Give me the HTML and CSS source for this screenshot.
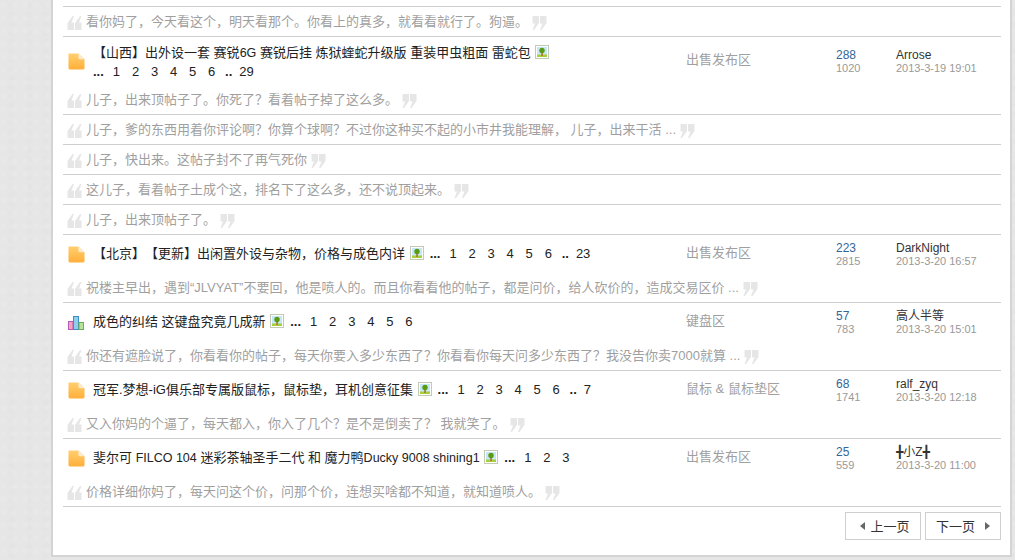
FILE: index.html
```html
<!DOCTYPE html>
<html lang="zh">
<head>
<meta charset="utf-8">
<title>论坛</title>
<link rel="stylesheet" href="styles.css">
</head>
<body>
<svg class="defs" width="0" height="0" aria-hidden="true">
  <defs>
    <linearGradient id="fold" x1="0" y1="0" x2="0" y2="1"><stop offset="0" stop-color="#ffcf70"/><stop offset="1" stop-color="#ffaf3a"/></linearGradient>
    <symbol id="file" viewBox="0 0 18 18"><path d="M1 0.500H11L17.500 6.500V16a1.500 1.500 0 0 1-1.500 1.500H2A1.500 1.500 0 0 1 .5 16V1.500A1 1 0 0 1 1 .5Z" fill="url(#fold)"/><path d="M11 .5 17.500 6.500H12.500A1.500 1.500 0 0 1 11 5Z" fill="#fbeacb"/></symbol>
    <symbol id="chart" viewBox="0 0 16 14"><rect x=".5" y="5.500" width="4.500" height="8" fill="#f7a3b5" stroke="#b45ab8"/><rect x="5.500" y=".5" width="5" height="13" fill="#8dcdf0" stroke="#3d8fc4"/><rect x="11" y="6.500" width="4.500" height="7" fill="#b7e29c" stroke="#6eb04f"/></symbol>
    <symbol id="pic" viewBox="0 0 14 14"><rect x=".5" y=".5" width="13" height="13" fill="#fff" stroke="#c4c9b4"/><rect x="2" y="2" width="10" height="10" fill="#c5e8f7"/><rect x="2" y="9.500" width="10" height="2.500" fill="#a6cf3c"/><rect x="6.300" y="7" width="1.500" height="4" fill="#b5672a"/><circle cx="7" cy="5.500" r="2.700" fill="#5b9a12"/></symbol>
    <symbol id="ql" viewBox="0 0 15 14"><path d="M5.500 0H7L4.500 6.500H7V14H.5V7ZM13 0H14.500L12 6.500H14.500V14H8V7Z" fill="#e6e6e6"/></symbol>
    <symbol id="qr" viewBox="0 0 15 14"><path d="M.5 0H7V7L2 14H.5L3 7.500H.5ZM8 0H14.500V7L9.500 14H8L10.500 7.500H8Z" fill="#e6e6e6"/></symbol>
  </defs>
</svg>
<main class="panel">
  <section class="post-quote first-quote">
    <svg class="q"><use href="#ql"/></svg><span>看你妈了，今天看这个，明天看那个。你看上的真多，就看看就行了。狗逼。</span><svg class="q qe"><use href="#qr"/></svg>
  </section>

  <article class="thread tall">
    <svg class="ico"><use href="#file"/></svg>
    <div class="title"><div>【山西】出外设一套 赛锐<span class="lat">6G</span> 赛锐后挂 炼狱蝰蛇升级版 重装甲虫粗面 雷蛇包 <svg class="pic"><use href="#pic"/></svg></div><div class="pages wrap"><b>...</b><i>1</i><i>2</i><i>3</i><i>4</i><i>5</i><i>6</i><b class="dd">..</b><i>29</i></div></div>
    <div class="forum">出售发布区</div>
    <div class="num"><a>288</a><small>1020</small></div>
    <div class="last"><span>Arrose</span><small>2013-3-19 19:01</small></div>
  </article>
  <section class="post-quote joined">
    <svg class="q"><use href="#ql"/></svg><span>儿子，出来顶帖子了。你死了？看着帖子掉了这么多。</span><svg class="q qe"><use href="#qr"/></svg>
  </section>
  <section class="post-quote">
    <svg class="q"><use href="#ql"/></svg><span>儿子，爹的东西用着你评论啊？你算个球啊？不过你这种买不起的小市井我能理解， 儿子，出来干活 ...</span><svg class="q qe"><use href="#qr"/></svg>
  </section>
  <section class="post-quote">
    <svg class="q"><use href="#ql"/></svg><span>儿子，快出来。这帖子封不了再气死你</span><svg class="q qe"><use href="#qr"/></svg>
  </section>
  <section class="post-quote">
    <svg class="q"><use href="#ql"/></svg><span>这儿子，看着帖子土成个这，排名下了这么多，还不说顶起来。</span><svg class="q qe"><use href="#qr"/></svg>
  </section>
  <section class="post-quote">
    <svg class="q"><use href="#ql"/></svg><span>儿子，出来顶帖子了。</span><svg class="q qe"><use href="#qr"/></svg>
  </section>

  <article class="thread">
    <svg class="ico"><use href="#file"/></svg>
    <div class="title"><div>【北京】【更新】出闲置外设与杂物，价格与成色内详 <svg class="pic"><use href="#pic"/></svg><span class="pages"><b>...</b><i>1</i><i>2</i><i>3</i><i>4</i><i>5</i><i>6</i><b class="dd">..</b><i>23</i></span></div></div>
    <div class="forum">出售发布区</div>
    <div class="num"><a>223</a><small>2815</small></div>
    <div class="last"><span>DarkNight</span><small>2013-3-20 16:57</small></div>
  </article>
  <section class="post-quote joined">
    <svg class="q"><use href="#ql"/></svg><span>祝楼主早出，遇到“JLVYAT”不要回，他是喷人的。而且你看看他的帖子，都是问价，给人砍价的，造成交易区价 ...</span><svg class="q qe"><use href="#qr"/></svg>
  </section>

  <article class="thread">
    <svg class="ico chart"><use href="#chart"/></svg>
    <div class="title"><div>成色的纠结 这键盘究竟几成新 <svg class="pic"><use href="#pic"/></svg><span class="pages"><b>...</b><i>1</i><i>2</i><i>3</i><i>4</i><i>5</i><i>6</i></span></div></div>
    <div class="forum">键盘区</div>
    <div class="num"><a>57</a><small>783</small></div>
    <div class="last"><span>高人半等</span><small>2013-3-20 15:01</small></div>
  </article>
  <section class="post-quote joined">
    <svg class="q"><use href="#ql"/></svg><span>你还有遮脸说了，你看看你的帖子，每天你要入多少东西了？你看看你每天问多少东西了？我没告你卖7000就算 ...</span><svg class="q qe"><use href="#qr"/></svg>
  </section>

  <article class="thread">
    <svg class="ico"><use href="#file"/></svg>
    <div class="title"><div>冠军.梦想-iG俱乐部专属版鼠标，鼠标垫，耳机创意征集 <svg class="pic"><use href="#pic"/></svg><span class="pages"><b>...</b><i>1</i><i>2</i><i>3</i><i>4</i><i>5</i><i>6</i><b class="dd">..</b><i>7</i></span></div></div>
    <div class="forum">鼠标 &amp; 鼠标垫区</div>
    <div class="num"><a>68</a><small>1741</small></div>
    <div class="last"><span>ralf_zyq</span><small>2013-3-20 12:18</small></div>
  </article>
  <section class="post-quote joined">
    <svg class="q"><use href="#ql"/></svg><span>又入你妈的个逼了，每天都入，你入了几个？是不是倒卖了？ 我就笑了。</span><svg class="q qe"><use href="#qr"/></svg>
  </section>

  <article class="thread">
    <svg class="ico"><use href="#file"/></svg>
    <div class="title"><div>斐尔可 <span class="lat">FILCO 104</span> 迷彩茶轴圣手二代 和 魔力鸭<span class="lat">Ducky 9008 shining1</span> <svg class="pic"><use href="#pic"/></svg><span class="pages"><b>...</b><i>1</i><i>2</i><i>3</i></span></div></div>
    <div class="forum">出售发布区</div>
    <div class="num"><a>25</a><small>559</small></div>
    <div class="last"><span><b class="sym">╋</b>小Z<b class="sym">╋</b></span><small>2013-3-20 11:00</small></div>
  </article>
  <section class="post-quote joined">
    <svg class="q"><use href="#ql"/></svg><span>价格详细你妈了，每天问这个价，问那个价，连想买啥都不知道，就知道喷人。</span><svg class="q qe"><use href="#qr"/></svg>
  </section>

  <nav class="pager">
    <a class="btn prev"><span class="tri left"></span>上一页</a>
    <a class="btn">下一页<span class="tri right"></span></a>
  </nav>
</main>
</body>
</html>
```

FILE: styles.css
```css
* { box-sizing: border-box; }
html, body { margin: 0; padding: 0; height: 560px; overflow: hidden; }
body {
  background-color: #e6e6e6;
  background-image:
    radial-gradient(circle at 30% 40%, #e9e9e9 0, transparent 4px),
    radial-gradient(circle at 70% 70%, #e3e3e3 0, transparent 5px);
  background-size: 11px 13px, 17px 9px;
  font-family: "Liberation Sans", "Noto Sans CJK SC", sans-serif;
  font-size: 12px;
  color: #222;
  text-spacing-trim: space-all;
}
.defs { position: absolute; }
.panel {
  margin-left: 53px;
  width: 957px;
  height: 555px;
  background: #fff;
  padding: 6px 9px 0 10px;
  box-shadow: 0 0 0 2px #d4d4d4;
}
.post-quote {
  height: 30px;
  border-bottom: 1px solid #cfcfcf;
  display: flex;
  align-items: center;
  font-size: 13px;
  color: #9f9f9f;
  white-space: nowrap;
  padding: 0 0 3px 4px;
}
.first-quote { height: 31px; border-top: 1px solid #cfcfcf; }
.q { width: 15px; height: 14px; flex: none; margin-right: 4px; position: relative; top: 3px; }
.qe { margin: 0 0 0 4px; }
.thread {
  height: 38px;
  display: flex;
  align-items: center;
}
.thread.tall { height: 48px; }
.ico { width: 17px; height: 17px; flex: none; margin: 0 8px 0 5px; }
.ico.chart { width: 16px; height: 14px; margin: 2px 9px 0 5px; }
.title { width: 593px; flex: none; align-self: flex-start; padding-top: 10px; font-size: 13px; line-height: 18px; color: #222; white-space: nowrap; }
.tall .title { padding-top: 7px; }
.lat { font-size: 12.5px; }
.pic { width: 14px; height: 14px; vertical-align: -2px; margin-left: 1px; }
.pages { margin-left: 6px; font-family: "Liberation Sans", sans-serif; font-size: 13px; }
.pages.wrap { margin: 1px 0 0; }
.pages b { font-weight: 700; margin-right: 9px; }
.pages i { font-style: normal; margin-right: 11.8px; }
.pages b.dd { margin-right: 7px; margin-left: -2px; }
.forum { width: 150px; flex: none; margin-top: -2px; font-size: 13px; line-height: 18px; color: #a0a0a0; white-space: nowrap; }
.num { width: 60px; flex: none; margin-top: 1px; }
.num a { display: block; font-size: 12px; line-height: 14px; color: #336699; }
small { display: block; font-size: 11px; line-height: 13px; color: #999; }
.last { flex: 1; margin-top: 1px; }
.last span { display: block; font-size: 12px; line-height: 14px; color: #333; white-space: nowrap; }
.sym { font-family: "DejaVu Sans Mono", monospace; font-weight: 400; font-size: 12px; line-height: 14px; }
.pager { display: flex; justify-content: flex-end; gap: 4px; padding: 5px 0 0; }
.btn {
  height: 28px;
  width: 76px;
  border: 1px solid #cfcfcf;
  display: flex;
  align-items: center;
  justify-content: center;
  gap: 5px;
  font-size: 13px;
  color: #333;
  background: #fff;
  padding-bottom: 2px;
}
.prev { padding-left: 4px; }
.tri { width: 0; height: 0; border-style: solid; }
.tri.left { border-width: 4px 5px 4px 0; border-color: transparent #666 transparent transparent; margin-top: 2px; }
.tri.right { border-width: 4px 0 4px 5px; border-color: transparent transparent transparent #666; margin: 2px 0 0 5px; }
```
